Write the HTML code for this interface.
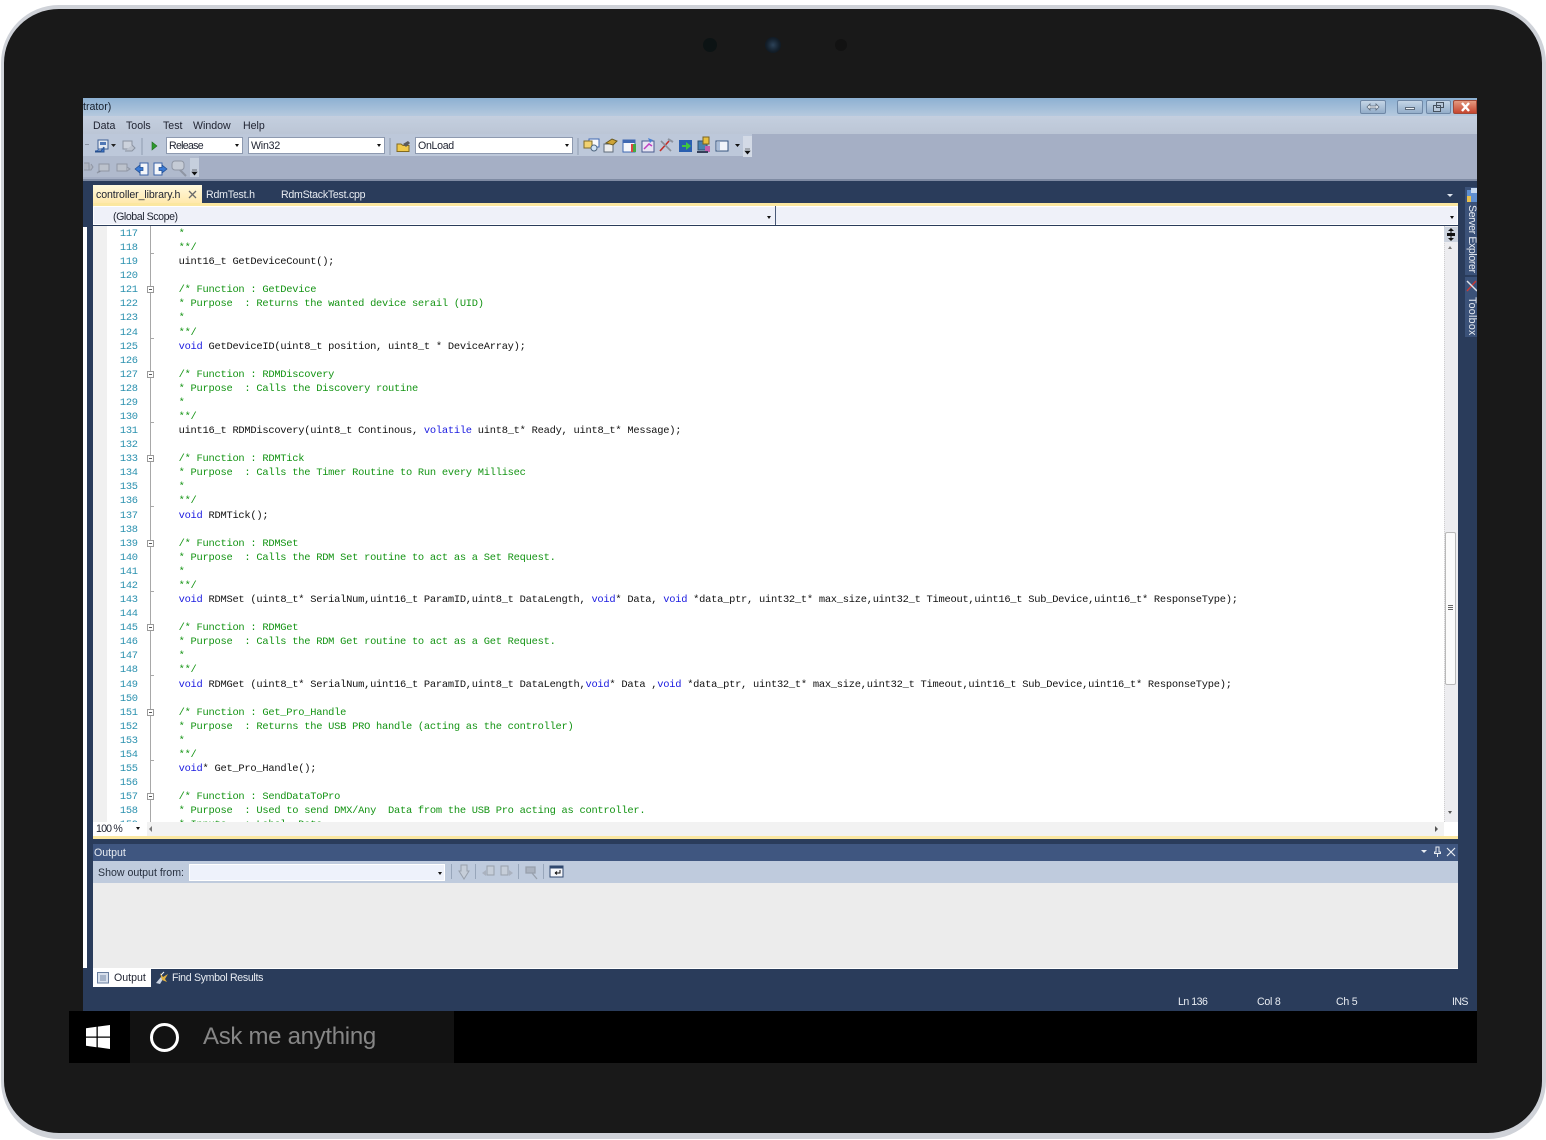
<!DOCTYPE html>
<html lang="en"><head><meta charset="utf-8"><title>Visual Studio</title>
<style>
*{box-sizing:border-box}
html,body{margin:0;padding:0;background:#fff}
body{position:relative;width:1546px;height:1140px;overflow:hidden;font-family:"Liberation Sans",sans-serif}
div,span,svg,pre{position:absolute}
pre span{position:static}
.t{font-size:10.6px;line-height:14px;white-space:nowrap;color:#1e2230}
.w{color:#e8ecf2}
.combo{background:#fff;border:1px solid #8e9ab0;height:17px}
.arr{width:0;height:0;border-left:2.5px solid transparent;border-right:2.5px solid transparent;border-top:3px solid #111}
pre{margin:0;font-family:"Liberation Mono",monospace;font-size:10.4px;line-height:14.085px;letter-spacing:-.252px;color:#111}
.c{color:#149414}.k{color:#1a1ae0}
.box{left:147px;width:7px;height:7px;border:1px solid #9a9a9a;background:#fff}
.box:after{content:"";position:absolute;left:1px;top:2px;width:3px;height:1px;background:#555}
.tick{left:150px;width:4px;height:1px;background:#a8a8a8}
</style></head><body>

<div style="left:1px;top:5px;width:1545px;height:1134px;border-radius:58px;background:#191919;border:3px solid #cfd2d8;border-top-width:4px;border-right-width:4px;border-bottom-width:6px"></div>
<div style="left:703px;top:38px;width:14px;height:14px;border-radius:50%;background:#0c1314"></div>
<div style="left:765px;top:37px;width:16px;height:16px;border-radius:50%;background:radial-gradient(circle,#2c4258 0,#14202c 55%,#0c1114 100%)"></div>
<div style="left:835px;top:39px;width:12px;height:12px;border-radius:50%;background:#121212"></div>

<!-- window -->
<div style="left:83px;top:98px;width:1394px;height:913px;background:#2a3c5b;overflow:hidden">
  <div style="left:0;top:0;width:1394px;height:18px;background:linear-gradient(#8db0d2,#b5c9de)"></div>
  <div style="left:0;top:18px;width:1394px;height:18px;background:linear-gradient(#c4cfdf,#bcc6d6)"></div>
  <div style="left:0;top:36px;width:1394px;height:46px;background:#a5afc5"></div>
  <div style="left:0;top:36px;width:669px;height:22px;background:#bdc8da"></div>
  <div style="left:0;top:58px;width:116px;height:21px;background:#b0bacd"></div>
  <div style="left:0;top:81px;width:1394px;height:2px;background:#7f8ba3"></div>
</div>
<div class="t" style="left:83px;top:100px;color:#16202e">trator)</div>
<div class="t" style="left:93px;top:119px">Data</div>
<div class="t" style="left:126px;top:119px">Tools</div>
<div class="t" style="left:163px;top:119px">Test</div>
<div class="t" style="left:193px;top:119px">Window</div>
<div class="t" style="left:243px;top:119px">Help</div>

<!-- window buttons -->
<div style="left:1360px;top:100px;width:26px;height:14px;border:1px solid #6f88a6;border-radius:2px;background:linear-gradient(#c5d5e6,#93adc9)"></div>
<svg style="left:1366px;top:102px" width="14" height="10"><path d="M1 5l3-3v2h6V2l3 3-3 3V6H4v2z" fill="#eef2f6" stroke="#5d6b7c" stroke-width=".8"/></svg>
<div style="left:1397px;top:100px;width:26px;height:14px;border:1px solid #6f88a6;border-radius:2px;background:linear-gradient(#c5d5e6,#93adc9)"></div>
<div style="left:1405px;top:107px;width:10px;height:3px;background:#eef2f6;border:1px solid #5d6b7c"></div>
<div style="left:1426px;top:100px;width:25px;height:14px;border:1px solid #6f88a6;border-radius:2px;background:linear-gradient(#c5d5e6,#93adc9)"></div>
<svg style="left:1432px;top:101px" width="13" height="12"><path d="M4.500 1.500h7v5h-7zM1.500 4.500h7v6h-7z" fill="#b8c8da" stroke="#46525f"/></svg>
<div style="left:1453px;top:100px;width:24px;height:14px;border:1px solid #a04a38;border-radius:2px 0 0 2px;background:linear-gradient(#e39a80,#c6452f)"></div>
<svg style="left:1460px;top:102px" width="11" height="10"><path d="M2 1l7 8M9 1L2 9" stroke="#fff" stroke-width="2.400"/></svg>

<!-- toolbar 1 -->
<svg style="left:83px;top:136px" width="670" height="44">
  <path d="M2 8.500h4" stroke="#8a93a3"/>
  <rect x="15" y="4" width="10" height="9" fill="#e3e8f0" stroke="#3f5f95"/><rect x="17" y="6" width="6" height="3" fill="#5077b5"/>
  <path d="M12 15h6l3-4M21 11v5h-9" fill="#3f7ad0" stroke="#27508f"/>
  <path d="M28 8h5l-2.500 3z" fill="#222"/>
  <rect x="40" y="5" width="9" height="8" fill="#ccd2dc" stroke="#8b93a1"/><path d="M42 15h7l3-3-3-3" fill="#bcc3cf" stroke="#8b93a1"/>
  <path d="M59 2v17" stroke="#8f9bb0"/>
  <path d="M69 6l5 4-5 4z" fill="#2e9a2e" stroke="#1f6d1f" stroke-width=".6"/>
  <path d="M307 2v17M495 2v17" stroke="#8f9bb0"/>
  <path d="M314 8h4l2 1.500h6v6h-12z" fill="#f0c94a" stroke="#826a20"/><path d="M320 8l5-3 2 2-4 4z" fill="#5b5b5b"/>
  <g>
    <rect x="506" y="3" width="10" height="8" fill="#f7f8fb" stroke="#3f68b2"/><rect x="501" y="5" width="8" height="7" fill="#f2d271" stroke="#7e6a2a"/><circle cx="511" cy="12" r="3" fill="#cfe3f7" stroke="#50667e"/>
    <rect x="521" y="8" width="9" height="8" fill="#eee" stroke="#5f6b7b"/><path d="M523 7l6-4 5 2-4 4z" fill="#cfa437" stroke="#6a5a20"/>
    <rect x="540" y="4" width="12" height="12" fill="#f5f7fb" stroke="#3f68b2"/><rect x="540" y="4" width="12" height="3" fill="#3f68b2"/><rect x="548" y="8" width="2" height="8" fill="#d44"/><rect x="550" y="8" width="3" height="8" fill="#4a4"/>
    <rect x="559" y="5" width="12" height="11" fill="#e7e4f3" stroke="#4a5d90"/><path d="M561 13l5-5 3 2" stroke="#c040c0" fill="none" stroke-width="1.500"/><path d="M565 2l5 2-3 3" fill="#4a7fd0"/>
    <path d="M577 15l9-10" stroke="#c32f2a" stroke-width="1.600"/><path d="M578 5l10 10" stroke="#8a8f98" stroke-width="1.600"/><path d="M585 3l5 3" stroke="#8c93a0" stroke-width="2"/>
    <rect x="596" y="4" width="13" height="12" fill="#2a5fb0"/><path d="M599 9h4V6l5 4-5 4v-3h-4z" fill="#3fc63f"/>
    <rect x="615" y="5" width="9" height="9" fill="#4a82b0" stroke="#2f4f6f"/><rect x="620" y="1" width="6" height="7" fill="#e8c040" stroke="#7a6420"/><rect x="622" y="10" width="5" height="6" fill="#c060b0"/><path d="M614 16h11" stroke="#36405a" stroke-width="2"/>
    <rect x="633" y="5" width="12" height="10" fill="#f2f5fa" stroke="#35537f"/><rect x="634" y="6" width="3" height="8" fill="#a8bcd8"/><path d="M652 8h5l-2.500 3z" fill="#111"/>
  </g>
  <rect x="660" y="-1" width="9" height="22" fill="#d3dae6"/><path d="M662 13h5M662 15h5l-2.500 3z" fill="#111" stroke="#111" stroke-width=".6"/>
</svg>
<div class="combo" style="left:166px;top:137px;width:77px"></div>
<div class="t" style="left:169px;top:139px;letter-spacing:-.7px">Release</div>
<div class="arr" style="left:235px;top:144px"></div>
<div class="combo" style="left:248px;top:137px;width:137px"></div>
<div class="t" style="left:251px;top:139px;letter-spacing:-.2px">Win32</div>
<div class="arr" style="left:377px;top:144px"></div>
<div class="combo" style="left:415px;top:137px;width:158px"></div>
<div class="t" style="left:418px;top:139px;letter-spacing:-.3px">OnLoad</div>
<div class="arr" style="left:565px;top:144px"></div>

<!-- toolbar 2 -->
<svg style="left:83px;top:158px" width="118" height="22">
  <path d="M1 5h5v7H1M3 12h5l2-3-2-3" fill="#aeb4c0" stroke="#8f96a4"/>
  <rect x="16" y="6" width="10" height="7" fill="#bcc2cc" stroke="#8f96a4"/><path d="M16 13l-2 2 4-2" stroke="#8f96a4"/>
  <rect x="34" y="6" width="10" height="7" fill="#bcc2cc" stroke="#8f96a4"/><path d="M44 9l3 2-3 2" fill="#aeb4c0" stroke="#8f96a4"/>
  <rect x="57" y="5" width="8" height="12" fill="#f4f6fa" stroke="#3a63a8"/><path d="M52 11l5-4v2.500h3v3h-3V15z" fill="#3b7ad4" stroke="#1f4c90" stroke-width=".7"/>
  <rect x="71" y="5" width="8" height="12" fill="#f4f6fa" stroke="#3a63a8"/><path d="M84 11l-5-4v2.500h-3v3h3V15z" fill="#3b7ad4" stroke="#1f4c90" stroke-width=".7"/>
  <rect x="89" y="3" width="12" height="9" rx="3" fill="#c5cbd5" stroke="#8f96a4"/><path d="M97 12l6 6" stroke="#8f96a4" stroke-width="2"/>
  <rect x="107" y="-1" width="9" height="20" fill="#c6cfdd"/><path d="M109 12h5M109 14h5l-2.500 3z" fill="#111" stroke="#111" stroke-width=".6"/>
</svg>

<!-- tabs -->
<div style="left:93px;top:185px;width:109px;height:18px;background:linear-gradient(#fff9de,#ffe9ad)"></div>
<div class="t" style="left:96px;top:188px;letter-spacing:-.1px">controller_library.h</div>
<svg style="left:188px;top:190px" width="10" height="10"><path d="M1 1l7 7M8 1L1 8" stroke="#6a6a6a" stroke-width="1.300"/></svg>
<div class="t w" style="left:206px;top:188px;letter-spacing:-.2px">RdmTest.h</div>
<div class="t w" style="left:281px;top:188px;letter-spacing:-.25px">RdmStackTest.cpp</div>
<div class="arr" style="left:1447px;top:194px;border-top-color:#dfe5ee;border-left-width:3px;border-right-width:3px"></div>
<div style="left:93px;top:203px;width:1365px;height:3px;background:#fbe7a0"></div>
<div style="left:93px;top:206px;width:1365px;height:19px;background:#eff1f9;border:1px solid #fff"></div>
<div style="left:775px;top:206px;width:1px;height:19px;background:#4a5a78"></div>
<div class="t" style="left:113px;top:210px;letter-spacing:-.43px">(Global Scope)</div>
<div class="arr" style="left:767px;top:216px"></div>
<div class="arr" style="left:1450px;top:216px"></div>

<!-- side tabs -->
<div style="left:1465px;top:187px;width:12px;height:88px;background:#3b5279"></div>
<div style="left:1465px;top:277px;width:12px;height:60px;background:#3b5279"></div>
<svg style="left:1466px;top:187px" width="11" height="16"><rect x="1" y="3" width="10" height="12" fill="#5f8fd0"/><rect x="5" y="1" width="6" height="5" fill="#c7d9ef"/><rect x="1" y="9" width="4" height="6" fill="#e8c050"/></svg>
<svg style="left:1466px;top:279px" width="11" height="14"><path d="M1 12L10 2" stroke="#c53a36" stroke-width="1.500"/><path d="M1 2l10 10" stroke="#dfe3ea" stroke-width="1.500"/></svg>
<div class="t w" style="left:1479px;top:205px;transform-origin:0 0;transform:rotate(90deg);letter-spacing:-.4px">Server Explorer</div>
<div class="t w" style="left:1479px;top:297px;transform-origin:0 0;transform:rotate(90deg);letter-spacing:.3px">Toolbox</div>

<!-- editor -->
<div style="left:83px;top:227px;width:4px;height:741px;background:#fff"></div>
<div style="left:93px;top:226px;width:1365px;height:596px;background:#fff;overflow:hidden">
  <div style="left:0;top:0;width:14px;height:596px;background:#f0f0f0"></div>
  <div style="left:57px;top:0;width:1px;height:596px;background:#a8a8a8"></div>
</div>
<div style="left:93px;top:226px;width:46px;height:596px;overflow:hidden">
<pre style="left:0;top:1px;width:44.800px;text-align:right;color:#2b91af">117
118
119
120
121
122
123
124
125
126
127
128
129
130
131
132
133
134
135
136
137
138
139
140
141
142
143
144
145
146
147
148
149
150
151
152
153
154
155
156
157
158
159</pre>
</div>
<div class="tick" style="top:253px"></div><div class="box" style="top:286px"></div>
<div class="tick" style="top:338px"></div><div class="box" style="top:371px"></div>
<div class="tick" style="top:422px"></div><div class="box" style="top:455px"></div>
<div class="tick" style="top:506px"></div><div class="box" style="top:540px"></div>
<div class="tick" style="top:591px"></div><div class="box" style="top:624px"></div>
<div class="tick" style="top:675px"></div><div class="box" style="top:709px"></div>
<div class="tick" style="top:760px"></div><div class="box" style="top:793px"></div>

<div style="left:178.600px;top:226px;width:1265px;height:596px;overflow:hidden">
<pre style="left:0;top:1px"><span class="c">*
**/</span>
uint16_t GetDeviceCount();

<span class="c">/* Function : GetDevice
* Purpose  : Returns the wanted device serail (UID)
*
**/</span>
<span class="k">void</span> GetDeviceID(uint8_t position, uint8_t * DeviceArray);

<span class="c">/* Function : RDMDiscovery
* Purpose  : Calls the Discovery routine
*
**/</span>
uint16_t RDMDiscovery(uint8_t Continous, <span class="k">volatile</span> uint8_t* Ready, uint8_t* Message);

<span class="c">/* Function : RDMTick
* Purpose  : Calls the Timer Routine to Run every Millisec
*
**/</span>
<span class="k">void</span> RDMTick();

<span class="c">/* Function : RDMSet
* Purpose  : Calls the RDM Set routine to act as a Set Request.
*
**/</span>
<span class="k">void</span> RDMSet (uint8_t* SerialNum,uint16_t ParamID,uint8_t DataLength, <span class="k">void</span>* Data, <span class="k">void</span> *data_ptr, uint32_t* max_size,uint32_t Timeout,uint16_t Sub_Device,uint16_t* ResponseType);

<span class="c">/* Function : RDMGet
* Purpose  : Calls the RDM Get routine to act as a Get Request.
*
**/</span>
<span class="k">void</span> RDMGet (uint8_t* SerialNum,uint16_t ParamID,uint8_t DataLength,<span class="k">void</span>* Data ,<span class="k">void</span> *data_ptr, uint32_t* max_size,uint32_t Timeout,uint16_t Sub_Device,uint16_t* ResponseType);

<span class="c">/* Function : Get_Pro_Handle
* Purpose  : Returns the USB PRO handle (acting as the controller)
*
**/</span>
<span class="k">void</span>* Get_Pro_Handle();

<span class="c">/* Function : SendDataToPro
* Purpose  : Used to send DMX/Any  Data from the USB Pro acting as controller.
* Inputs   : Label, Data</span></pre>
</div>

<!-- v scrollbar -->
<div style="left:1444px;top:226px;width:14px;height:596px;background:#ededf0;border-left:1px dotted #d0d0d0"></div>
<div style="left:1444px;top:227px;width:14px;height:15px;background:#ccd3de"></div>
<svg style="left:1446px;top:228px" width="10" height="13"><path d="M5 0l3 3H2zM5 13l3-3H2zM1 5h8v3H1z" fill="#111"/><path d="M5 3v7" stroke="#111"/></svg>
<div class="arr" style="left:1448px;top:246px;border-top:0;border-bottom:3px solid #777"></div>
<div style="left:1445px;top:532px;width:11px;height:153px;background:#fbfbfb;border:1px solid #b9b9b9;border-radius:2px"></div>
<div style="left:1448px;top:605px;width:5px;height:1px;background:#666;box-shadow:0 2px #666,0 4px #666"></div>
<div class="arr" style="left:1448px;top:811px;border-top-color:#555"></div>

<!-- h scrollbar -->
<div style="left:93px;top:822px;width:1365px;height:14px;background:#f2f2f2"></div>
<div style="left:93px;top:822px;width:54px;height:14px;background:#fff"></div>
<div style="left:1444px;top:822px;width:14px;height:14px;background:#fff"></div>
<div class="t" style="left:96px;top:822px;letter-spacing:-.8px">100 %</div>
<div class="arr" style="left:136px;top:827px"></div>
<svg style="left:148px;top:825px" width="6" height="8"><path d="M4 1L1 4l3 3z" fill="#777"/></svg>
<svg style="left:1433px;top:825px" width="6" height="8"><path d="M2 1l3 3-3 3z" fill="#555"/></svg>
<div style="left:93px;top:836px;width:1365px;height:3px;background:#fbe7a0"></div>

<!-- output -->
<div style="left:93px;top:844px;width:1365px;height:17px;background:#3f5680"></div>
<div class="t w" style="left:94px;top:846px">Output</div>
<div class="arr" style="left:1421px;top:850px;border-top-color:#e8ecf2;border-left-width:3px;border-right-width:3px"></div>
<svg style="left:1433px;top:846px" width="9" height="11"><path d="M3 1h3v5h1.500v1.500h-6V6H3zM4.500 7.500V11" stroke="#e8ecf2" fill="none"/></svg>
<svg style="left:1446px;top:847px" width="10" height="10"><path d="M1 1l8 8M9 1L1 9" stroke="#e8ecf2" stroke-width="1.200"/></svg>
<div style="left:93px;top:861px;width:1365px;height:22px;background:#bfcbdd"></div>
<div class="t" style="left:98px;top:866px;color:#27303f">Show output from:</div>
<div class="combo" style="left:189px;top:864px;width:256px;background:#eef2fb;border-color:#fff"></div>
<div class="arr" style="left:438px;top:872px"></div>
<svg style="left:450px;top:863px" width="120" height="18">
  <path d="M1.500 1v15M25.500 1v15M68.500 1v15M93.500 1v15" stroke="#98a6ba"/>
  <path d="M11 2h6v6h2l-5 8-5-8h2z" fill="#c6ced9" stroke="#98a0ac"/>
  <rect x="37" y="3" width="7" height="9" fill="#c6ced9" stroke="#98a0ac"/><path d="M32 10l4-3v6z" fill="#aab2bf"/>
  <rect x="51" y="3" width="7" height="9" fill="#c6ced9" stroke="#98a0ac"/><path d="M63 10l-4-3v6z" fill="#aab2bf"/>
  <path d="M76 4h9v6h-9zM82 10l5 6" stroke="#98a0ac" fill="#aab2bf" stroke-width="1.300"/>
  <rect x="100" y="3" width="13" height="11" fill="#f7f8fb" stroke="#30486e"/><rect x="100" y="3" width="13" height="2.500" fill="#30486e"/><path d="M110 7v3h-5M105 10l2-1.500M105 10l2 1.500" stroke="#111" fill="none"/>
</svg>
<div style="left:93px;top:883px;width:1365px;height:86px;background:#ececec;border-bottom:1px solid #fff"></div>

<!-- bottom tabs -->
<div style="left:93px;top:969px;width:58px;height:18px;background:#fff"></div>
<svg style="left:97px;top:972px" width="13" height="12"><rect x=".5" y=".5" width="11" height="10.500" fill="#d8e0ec" stroke="#6a7f9f"/><path d="M3 4h6M3 6h6M3 8h6" stroke="#7488a6"/></svg>
<div class="t" style="left:114px;top:971px">Output</div>
<svg style="left:155px;top:971px" width="14" height="14"><path d="M1 12l5-6 2 2-3 5z" fill="#c9d3e2"/><path d="M5 2l3 4 5-3-3 5 2 3-5-2z" fill="#e0b040"/><path d="M6 4l3-3" stroke="#fff"/></svg>
<div class="t w" style="left:172px;top:971px;letter-spacing:-.32px">Find Symbol Results</div>

<!-- status -->
<div class="t w" style="left:1178px;top:995px;letter-spacing:-.5px">Ln 136</div>
<div class="t w" style="left:1257px;top:995px;letter-spacing:-.25px">Col 8</div>
<div class="t w" style="left:1336px;top:995px;letter-spacing:-.25px">Ch 5</div>
<div class="t w" style="left:1452px;top:995px;letter-spacing:-.6px">INS</div>

<!-- taskbar -->
<div style="left:69px;top:1011px;width:1408px;height:52px;background:#000"></div>
<div style="left:130px;top:1011px;width:324px;height:52px;background:#121212"></div>
<svg style="left:86px;top:1025px" width="24" height="24"><path d="M0 3.300l10.500-1.500v9.700H0zM11.800 1.600L24 0v11.500H11.800zM0 12.800h10.500v9.500L0 20.800zM11.800 12.800H24V24l-12.200-1.700z" fill="#fff"/></svg>
<div style="left:150px;top:1023px;width:29px;height:29px;border:3.500px solid #fff;border-radius:50%"></div>
<div style="left:203px;top:1022px;font-size:24px;line-height:30px;letter-spacing:-.3px;color:#868686;white-space:nowrap">Ask me anything</div>
</body></html>
